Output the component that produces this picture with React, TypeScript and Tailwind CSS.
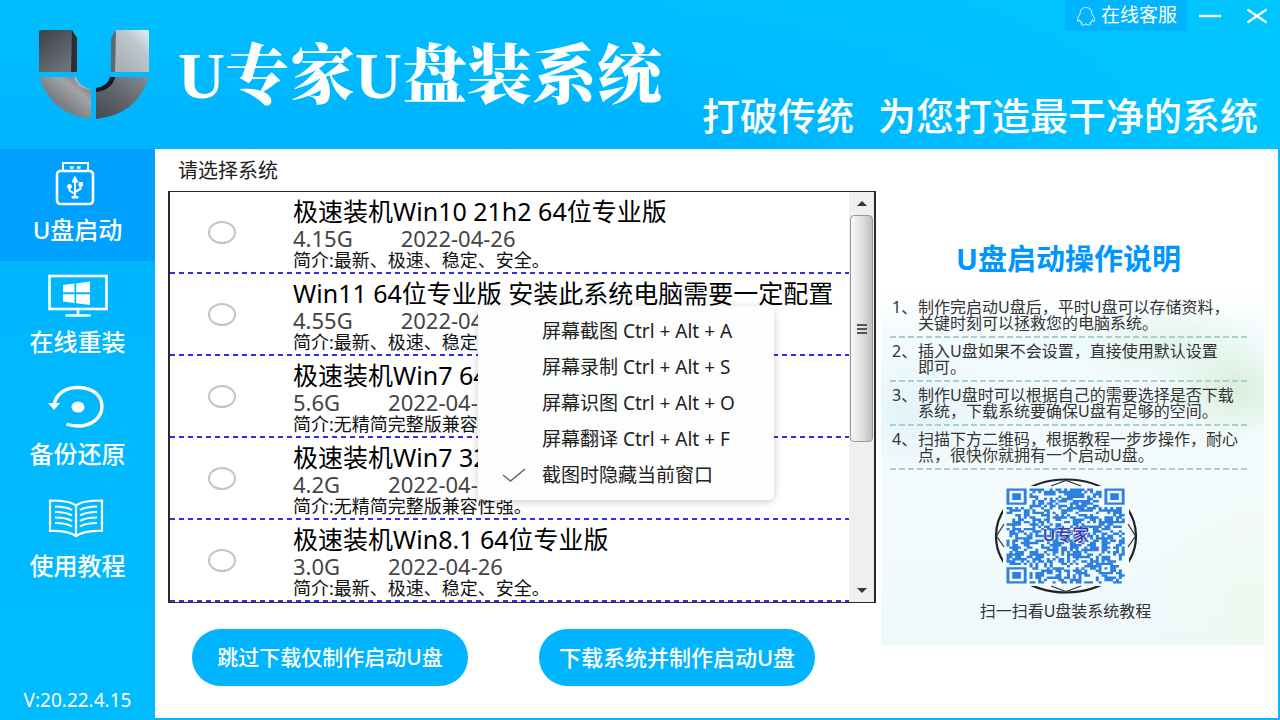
import React from "react";

type System = { name: string; size: string; date: string; info: string };

const systems: System[] = [
  { name: "极速装机Win10 21h2 64位专业版", size: "4.15G", date: "2022-04-26", info: "简介:最新、极速、稳定、安全。" },
  { name: "Win11 64位专业版 安装此系统电脑需要一定配置", size: "4.55G", date: "2022-04-26", info: "简介:最新、极速、稳定、安全。" },
  { name: "极速装机Win7 64位旗舰版", size: "5.6G", date: "2022-04-26", info: "简介:无精简完整版兼容性强。" },
  { name: "极速装机Win7 32位旗舰版", size: "4.2G", date: "2022-04-26", info: "简介:无精简完整版兼容性强。" },
  { name: "极速装机Win8.1 64位专业版", size: "3.0G", date: "2022-04-26", info: "简介:最新、极速、稳定、安全。" },
];

const menuItems = [
  "屏幕截图 Ctrl + Alt + A",
  "屏幕录制 Ctrl + Alt + S",
  "屏幕识图 Ctrl + Alt + O",
  "屏幕翻译 Ctrl + Alt + F",
];

const steps = [
  ["制作完启动U盘后，平时U盘可以存储资料，", "关键时刻可以拯救您的电脑系统。"],
  ["插入U盘如果不会设置，直接使用默认设置", "即可。"],
  ["制作U盘时可以根据自己的需要选择是否下载", "系统，下载系统要确保U盘有足够的空间。"],
  ["扫描下方二维码，根据教程一步步操作，耐心", "点，很快你就拥有一个启动U盘。"],
];

function Logo() {
  return (
    <svg viewBox="0 0 112 92" className="h-[92px] w-[112px] shrink-0" aria-hidden="true">
      <defs>
        <linearGradient id="tl" x1="0" y1="0" x2="0.6" y2="1">
          <stop offset="0" stopColor="#3e4247" />
          <stop offset="1" stopColor="#6a7078" />
        </linearGradient>
        <linearGradient id="tr" x1="1" y1="0" x2="0.2" y2="1">
          <stop offset="0" stopColor="#e2eef4" />
          <stop offset="0.4" stopColor="#bcc5cd" />
          <stop offset="1" stopColor="#a9aeb6" />
        </linearGradient>
        <linearGradient id="bl" x1="0" y1="1" x2="1" y2="0">
          <stop offset="0.4" stopColor="#7b7f84" />
          <stop offset="0.7" stopColor="#a2a4a8" />
          <stop offset="1" stopColor="#63676c" />
        </linearGradient>
        <linearGradient id="br" x1="0" y1="1" x2="1" y2="0">
          <stop offset="0" stopColor="#454a4f" />
          <stop offset="0.5" stopColor="#5f656b" />
          <stop offset="1" stopColor="#858d94" />
        </linearGradient>
      </defs>
      <path d="M2 2H34V44H1V4Z" fill="url(#tl)" />
      <path d="M34 2L39 10V44H33Z" fill="#2b2e32" />
      <path d="M78 2H110Q111 2 111 4V44H77V4Z" fill="url(#tr)" />
      <path d="M78 2L73 10V44H77Z" fill="#62676d" />
      <path d="M1 49H38Q41 59 53 61V91Q14 87 1 49Z" fill="url(#bl)" />
      <path d="M36 49H38Q41 59 53 61V62Q39 60 36 49Z" fill="#b4b8bc" />
      <path d="M76 49H111Q99 87 58 91V61Q71 60 76 49Z" fill="url(#br)" />
      <path d="M72 49H77Q74 62 58 64V60Q70 58 72 49Z" fill="#16191c" />
    </svg>
  );
}

function UsbIcon() {
  return (
    <svg viewBox="1 0 60 46" className="h-[46px] w-[60px]" fill="none" stroke="#fff" strokeWidth="2" aria-hidden="true">
      <path d="M16 10V2H41V10" />
      <rect x="10" y="10" width="36" height="33" rx="3.500" strokeWidth="2.600" />
      <path d="M23 6.500h3.500M30 6.500h3.500" strokeWidth="2.400" />
      <path d="M28 20V37M28 33L22.500 29.500V26M28 31L33.500 28V24.500" strokeWidth="2" />
      <path d="M28 15.500L31 21H25Z" fill="#fff" strokeWidth="1" />
      <circle cx="22.500" cy="25.500" r="2" fill="#fff" strokeWidth="1" />
      <path d="M32 21.500h3.500v3.500h-3.500zM25 35.500h6v1.500h-6z" fill="#fff" strokeWidth="1" />
    </svg>
  );
}

function ScreenIcon() {
  return (
    <svg viewBox="0 1 60 46" className="h-[46px] w-[60px]" fill="none" stroke="#fff" strokeWidth="2.600" aria-hidden="true">
      <rect x="1.500" y="4" width="57" height="33" />
      <path d="M30 37V43M17.500 43.500H42.500" />
      <path d="M15 13L26.500 11.600V20.300H15ZM28.200 11.400L42 9.500V20.300H28.200ZM15 22.200H26.500V31L15 29.600ZM28.200 22.200H42V33L28.200 31.200Z" fill="#fff" stroke="none" />
    </svg>
  );
}

function RestoreIcon() {
  return (
    <svg viewBox="1 2 60 46" className="h-[46px] w-[60px]" fill="none" stroke="#fff" aria-hidden="true">
      <path d="M7 22C9 11 18 4.500 31 4.500C45 4.500 55 12 55 23.500C55 35 44 43 31 43C26 43 23 42.300 19.500 41" strokeWidth="3.400" />
      <path d="M1 20H13L7 27Z" fill="#fff" stroke="none" />
      <ellipse cx="31" cy="24" rx="6.500" ry="5.500" fill="#fff" stroke="none" />
    </svg>
  );
}

function BookIcon() {
  return (
    <svg viewBox="1 2 60 46" className="h-[46px] w-[60px]" fill="none" stroke="#fff" strokeWidth="2.200" aria-hidden="true">
      <path d="M29 10.500C24 6.500 12 5.500 3 5.500V36C12 35.800 23 37 29 41C35 37 46 35.800 55 36V5.500C46 5.500 34 6.500 29 10.500ZM29 10.500V40" />
      <path d="M8 11.500C14 11.500 21 12.500 25 15M8 17C14 17 21 18 25 20.500M8 22.500C14 22.500 21 23.500 25 26M8 28C14 28 21 29 25 31.500M50 11.500C44 11.500 37 12.500 33 15M50 17C44 17 37 18 33 20.500M50 22.500C44 22.500 37 23.500 33 26M50 28C44 28 37 29 33 31.500" strokeWidth="2" />
    </svg>
  );
}

const N = 41;

function buildModules(): string {
  let seed = 20220415;
  const next = () => {
    seed = (Math.imul(seed, 1103515245) + 12345) & 0x7fffffff;
    return (seed >> 12) / 524288;
  };
  let d = "";
  for (let y = 0; y < N; y++) {
    for (let x = 0; x < N; x++) {
      const dark = next() < 0.53;
      const finder = (x < 8 && y < 8) || (x > N - 9 && y < 8) || (x < 8 && y > N - 9);
      const align = x >= 32 && x <= 36 && y >= 32 && y <= 36;
      if (dark && !finder && !align) d += `M${x} ${y}h1.05v1.05h-1.05z`;
    }
  }
  return d;
}

const modules = buildModules();

function QrCode() {
  return (
    <svg viewBox="0 0 144 116" className="h-[116px] w-36" role="img" aria-label="U专家">
      <ellipse cx="72" cy="58" rx="70" ry="56.500" fill="none" stroke="#1c2226" strokeWidth="2.200" />
      <path d="M9 8H135V108H9Z" fill="#f4fbfc" />
      <path d="M57 8L72 2.500L87 8M57 108L72 113.500L87 108M10 46L2.500 58L10 69M134 46L141.500 58L134 69" fill="none" stroke="#33393d" strokeWidth="1.300" />
      <g transform="translate(12.500 10.500) scale(2.880 2.317)" fill="#2b80e0">
        <path d={modules} />
        {[[0, 0], [34, 0], [0, 34]].map(([x, y]) => (
          <path key={`${x}-${y}`} fillRule="evenodd" d={`M${x} ${y}h7v7h-7zM${x + 1} ${y + 1}v5h5v-5zM${x + 2} ${y + 2}h3v3h-3z`} />
        ))}
        <path fillRule="evenodd" d="M32 32h5v5h-5zM33 33v3h3v-3zM34 34h1v1h-1z" />
      </g>
      <text x="72" y="63" textAnchor="middle" fontSize="17" fontWeight="500" fill="#3b35a8" stroke="#d3e8fa" strokeWidth="1" paintOrder="stroke">
        U专家
      </text>
    </svg>
  );
}

const navItems = [
  { label: "U盘启动", icon: <UsbIcon />, active: true },
  { label: "在线重装", icon: <ScreenIcon />, active: false },
  { label: "备份还原", icon: <RestoreIcon />, active: false },
  { label: "使用教程", icon: <BookIcon />, active: false },
];

export default function App() {
  return (
    <div className="flex min-h-screen flex-col bg-[#00b8ff] font-['Noto_Sans','Noto_Sans_CJK_SC',sans-serif] whitespace-nowrap text-black">
      <header className="flex h-[149px] shrink-0 bg-linear-to-b from-[#00bfff] to-[#00b3ff] pl-[38px] text-white">
        <div className="flex pt-7">
          <Logo />
          <h1 className="pl-7 font-['Liberation_Serif','Noto_Serif_CJK_SC','Noto_Sans_CJK_SC',serif] text-[65px] leading-[96px] font-black">
            U专家U盘装系统
          </h1>
        </div>
        <div className="flex flex-1 flex-col items-end justify-between bg-linear-to-r from-[#00bfff]/0 to-[#00c6ff]">
          <div className="flex h-[31px] items-stretch">
            <button className="flex items-center gap-1 bg-[#00b4fd] px-2.5 text-[19px] leading-none">
              <svg viewBox="0 0 22 20" className="h-5 w-[22px]" fill="none" stroke="#b8e9ff" strokeWidth="1.100" aria-hidden="true">
                <path d="M11 1.500C7 1.500 5 4.500 5 8C3.500 10 2 12.500 2.500 15C3 16 4 14.500 4.500 14C5 15.500 6 16.500 7 17C5.500 18 6 19 8 19C9.500 19 10.500 18.500 11 18C11.500 18.500 12.500 19 14 19C16 19 16.500 18 15 17C16 16.500 17 15.500 17.500 14C18 14.500 19 16 19.500 15C20 12.500 18.500 10 17 8C17 4.500 15 1.500 11 1.500Z" />
              </svg>
              在线客服
            </button>
            <button aria-label="最小化" className="flex w-[46px] items-center justify-center">
              <svg viewBox="0 0 22 16" className="h-4 w-[22px]" stroke="#fff" strokeWidth="2.400">
                <path d="M0 8H22" />
              </svg>
            </button>
            <button aria-label="关闭" className="flex w-[47px] items-center justify-center">
              <svg viewBox="0 0 22 16" className="h-4 w-[22px]" stroke="#fff" strokeWidth="2.200">
                <path d="M1.500 1.500L20.500 14.500M20.500 1.500L1.500 14.500" />
              </svg>
            </button>
          </div>
          <p className="flex gap-6 pr-[22px] pb-2.5 font-['Noto_Sans_CJK_SC',sans-serif] text-[38px] leading-[50px] font-medium">
            <span>打破传统</span>
            <span>为您打造最干净的系统</span>
          </p>
        </div>
      </header>

      <div className="flex flex-1">
        <nav className="flex w-[155px] shrink-0 flex-col bg-linear-to-b from-[#00b5ff] to-[#00bcff] text-white">
          {navItems.map((item) => (
            <button
              key={item.label}
              className={
                item.active
                  ? "flex h-28 flex-col items-center bg-[#00a0ff] pt-3 text-2xl font-medium"
                  : "flex h-28 flex-col items-center pt-3 text-2xl font-medium"
              }
            >
              {item.icon}
              <span className="leading-[46px]">{item.label}</span>
            </button>
          ))}
          <p className="mt-auto pb-1.5 text-center text-[19px] leading-7">V:20.22.4.15</p>
        </nav>

        <main className="mr-0.5 mb-0.5 flex flex-1 gap-[5px] bg-white pr-3.5 pl-[13px]">
          <section className="flex-1">
            <h2 className="mt-2 mb-1.5 pl-2.5 text-xl leading-7 text-[#222]">请选择系统</h2>
            <div className="relative flex border-x-2 border-y border-[#2a2a2a]">
              <ul className="flex-1">
                {systems.map((s) => (
                  <li key={s.name}>
                    <label className="flex h-20 items-center">
                      <input
                        type="radio"
                        name="system"
                        aria-label={s.name}
                        className="mr-[57px] ml-[38px] h-[23px] w-7 shrink-0 appearance-none rounded-[50%] border-2 border-[#c4c4c4] bg-white checked:border-[#00a0ff]"
                      />
                      <span className="flex flex-col pt-1">
                        <span className="text-[25px] leading-[31px]">{s.name}</span>
                        <span className="flex gap-12 text-[22px] leading-[22px] text-[#444]">
                          <span>{s.size}</span>
                          <span>{s.date}</span>
                        </span>
                        <span className="text-lg leading-[23px] text-[#111]">{s.info}</span>
                      </span>
                    </label>
                    <div className="h-0.5 bg-[repeating-linear-gradient(90deg,#3030f0_0_5px,transparent_5px_9px)]" />
                  </li>
                ))}
              </ul>
              <div className="flex w-[25px] flex-col bg-[#efefef]">
                <button aria-label="向上滚动" className="flex h-[23px] items-center justify-center">
                  <svg viewBox="0 0 10 5" className="h-[5px] w-2.5"><path d="M0 5L5 0L10 5Z" fill="#333" /></svg>
                </button>
                <div className="mx-px flex h-[227px] flex-col items-center justify-center gap-0.5 rounded-sm border border-[#999] bg-linear-to-r from-[#f7f7f7] via-[#e2e2e4] to-[#bdbdc2]">
                  <span className="h-0.5 w-2.5 bg-[#555]" />
                  <span className="h-0.5 w-2.5 bg-[#555]" />
                  <span className="h-0.5 w-2.5 bg-[#555]" />
                </div>
                <button aria-label="向下滚动" className="mt-auto flex h-[23px] items-center justify-center">
                  <svg viewBox="0 0 10 5" className="h-[5px] w-2.5"><path d="M0 0L5 5L10 0Z" fill="#333" /></svg>
                </button>
              </div>

              <div role="menu" className="absolute top-[114px] left-[308px] w-[296px] rounded-md bg-[#fcfdfd] py-[7px] shadow-[0_2px_8px_rgba(0,0,0,0.2)]">
                {menuItems.map((m) => (
                  <button key={m} role="menuitem" className="block h-9 w-full pl-16 text-left text-[19px] leading-9 text-[#222]">
                    {m}
                  </button>
                ))}
                <button role="menuitemcheckbox" aria-checked="true" className="flex h-9 w-full items-center pl-6 text-left text-[19px] leading-9 text-[#222]">
                  <svg viewBox="0 0 24 14" className="mr-4 h-3.5 w-6" fill="none" stroke="#666" strokeWidth="1.500" aria-hidden="true">
                    <path d="M1 7L8.500 13L23 1" />
                  </svg>
                  截图时隐藏当前窗口
                </button>
              </div>
            </div>

            <div className="mt-[26px] flex gap-[71px] pl-6 font-medium text-white">
              <button className="h-[57px] w-[276px] rounded-full bg-[#00b4ff] text-[21px]">跳过下载仅制作启动U盘</button>
              <button className="h-[57px] w-[276px] rounded-full bg-[#00b4ff] text-[22px]">下载系统并制作启动U盘</button>
            </div>
          </section>

          <aside className="w-[383px] shrink-0 pt-[90px]">
            <h2 className="mb-[11px] pr-2 text-center text-[29px] leading-10 font-bold text-[#0096ff]">U盘启动操作说明</h2>
            <div className="bg-[radial-gradient(ellipse_70px_50px_at_92%_28%,#d9eeda_0%,transparent_100%),radial-gradient(ellipse_100px_40px_at_75%_15%,#e3f4ec_0%,transparent_100%),radial-gradient(ellipse_90px_60px_at_8%_35%,#e3f3fb_0%,transparent_100%),radial-gradient(ellipse_120px_120px_at_100%_90%,#eff8ee_0%,transparent_100%),linear-gradient(180deg,#ffffff_0%,#f1fafc_15%,#f4fbfc_60%,#eef8fb_100%)] pt-1 pb-6">
              <ol className="pr-4 pl-[9px] text-base leading-4 text-[#333]">
                {steps.map((lines, i) => (
                  <li key={lines[0]}>
                    <div className="flex py-[5px] pl-0.5">
                      <span className="w-[26px] shrink-0">{i + 1}、</span>
                      <span>
                        {lines[0]}
                        <br />
                        {lines[1]}
                      </span>
                    </div>
                    <div className="h-0.5 bg-[repeating-linear-gradient(90deg,#a9d0cb_0_6px,transparent_6px_9px)]" />
                  </li>
                ))}
              </ol>
              <div className="mt-2 flex flex-col items-center pr-3.5">
                <QrCode />
                <p className="mt-[7px] text-base leading-5 text-[#333]">扫一扫看U盘装系统教程</p>
              </div>
            </div>
          </aside>
        </main>
      </div>
    </div>
  );
}
